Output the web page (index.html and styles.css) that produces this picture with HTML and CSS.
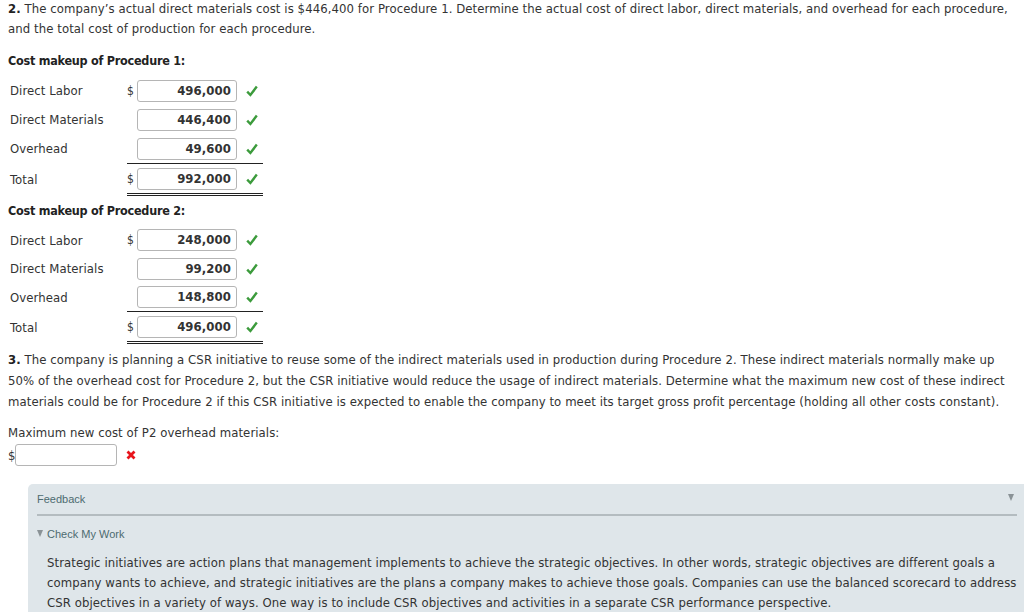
FILE: index.html
```html
<!DOCTYPE html>
<html>
<head>
<meta charset="utf-8">
<link rel="stylesheet" href="styles.css">
</head>
<body>
<div class="page">
  <p class="q q2"><b>2.</b> The company’s actual direct materials cost is $446,400 for Procedure 1. Determine the actual cost of direct labor, direct materials, and overhead for each procedure, and the total cost of production for each procedure.</p>

  <div class="sec-title first">Cost makeup of Procedure 1:</div>
  <div class="tbl">
    <div class="row"><span class="lbl">Direct Labor</span><span class="amt"><span class="cur">$</span><span class="box">496,000</span><svg class="ok" viewBox="0 0 12 12"><path d="M1.2 6.6 L4.4 10 L10.8 1.6" /></svg></span></div>
    <div class="row"><span class="lbl">Direct Materials</span><span class="amt"><span class="cur"></span><span class="box">446,400</span><svg class="ok" viewBox="0 0 12 12"><path d="M1.2 6.6 L4.4 10 L10.8 1.6" /></svg></span></div>
    <div class="row"><span class="lbl">Overhead</span><span class="amt"><span class="cur"></span><span class="box">49,600</span><svg class="ok" viewBox="0 0 12 12"><path d="M1.2 6.6 L4.4 10 L10.8 1.6" /></svg></span></div>
    <div class="row total"><span class="lbl">Total</span><span class="amt"><span class="cur">$</span><span class="box">992,000</span><svg class="ok" viewBox="0 0 12 12"><path d="M1.2 6.6 L4.4 10 L10.8 1.6" /></svg></span></div>
  </div>

  <div class="sec-title second">Cost makeup of Procedure 2:</div>
  <div class="tbl tight">
    <div class="row"><span class="lbl">Direct Labor</span><span class="amt"><span class="cur">$</span><span class="box">248,000</span><svg class="ok" viewBox="0 0 12 12"><path d="M1.2 6.6 L4.4 10 L10.8 1.6" /></svg></span></div>
    <div class="row"><span class="lbl">Direct Materials</span><span class="amt"><span class="cur"></span><span class="box">99,200</span><svg class="ok" viewBox="0 0 12 12"><path d="M1.2 6.6 L4.4 10 L10.8 1.6" /></svg></span></div>
    <div class="row"><span class="lbl">Overhead</span><span class="amt"><span class="cur"></span><span class="box">148,800</span><svg class="ok" viewBox="0 0 12 12"><path d="M1.2 6.6 L4.4 10 L10.8 1.6" /></svg></span></div>
    <div class="row total"><span class="lbl">Total</span><span class="amt"><span class="cur">$</span><span class="box">496,000</span><svg class="ok" viewBox="0 0 12 12"><path d="M1.2 6.6 L4.4 10 L10.8 1.6" /></svg></span></div>
  </div>

  <p class="q q3"><b>3.</b> The company is planning a CSR initiative to reuse some of the indirect materials used in production during Procedure 2. These indirect materials normally make up 50% of the overhead cost for Procedure 2, but the CSR initiative would reduce the usage of indirect materials. Determine what the maximum new cost of these indirect materials could be for Procedure 2 if this CSR initiative is expected to enable the company to meet its target gross profit percentage (holding all other costs constant).</p>

  <div class="max-lbl">Maximum new cost of P2 overhead materials:</div>
  <div class="max-row"><span class="cur2">$</span><span class="box empty"></span><svg class="bad" viewBox="0 0 10 10"><path d="M1.5 1.5 L8.5 8.5 M8.5 1.5 L1.5 8.5" /></svg></div>

  <div class="feedback">
    <div class="fb-head"><span>Feedback</span><svg class="fb-tri" viewBox="0 0 6 7"><path d="M0 0 H6 L3 7 Z" /></svg></div>
    <div class="fb-sub"><svg class="tri-s" viewBox="0 0 6 7"><path d="M0 0 H6 L3 7 Z" /></svg><span>Check My Work</span></div>
    <p class="fb-text">Strategic initiatives are action plans that management implements to achieve the strategic objectives. In other words, strategic objectives are different goals a company wants to achieve, and strategic initiatives are the plans a company makes to achieve those goals. Companies can use the balanced scorecard to address CSR objectives in a variety of ways. One way is to include CSR objectives and activities in a separate CSR performance perspective.</p>
  </div>
</div>
</body>
</html>
```
FILE: styles.css
```css
html, body {
  margin: 0;
  padding: 0;
  background: #fff;
}
body {
  font-family: "DejaVu Sans Condensed", "DejaVu Sans", Verdana, sans-serif;
  font-size: 13px;
  letter-spacing: 0.08px;
  color: #333;
  overflow: hidden;
}
.page {
  padding: 0 0 0 8px;
}
.q {
  margin: 0;
  line-height: 20px;
}
.q b { color: #222; }
.q2 { margin-top: -1px; padding-right: 10px; }
.sec-title {
  font-weight: bold;
  font-size: 12.5px;
  letter-spacing: -0.25px;
  line-height: 20px;
  color: #222;
}
.sec-title.first { margin-top: 12px; }
.sec-title.second { margin-top: 5px; }
.tbl {
  margin-top: 5px;
  padding-left: 2px;
}
.row {
  display: flex;
  align-items: center;
  height: 29px;
}
.tight .row {
  height: 28.5px;
}
.row.total,
.tight .row.total {
  height: 33px;
}
.tight .row.total { margin-top: -0.5px; }
.lbl {
  width: 117px;
}
.amt {
  display: flex;
  align-items: center;
  width: 136px;
  height: 29px;
}
.total .amt {
  border-top: 1px solid #222;
  border-bottom: 3px double #222;
}
.cur {
  width: 10px;
  font-size: 12px;
}
.box {
  box-sizing: border-box;
  width: 100px;
  height: 22px;
  border: 1px solid #b5b5b5;
  border-radius: 3px;
  text-align: right;
  font-weight: bold;
  line-height: 20px;
  padding-right: 5px;
  color: #333;
  background: #fff;
}
.ok {
  width: 12px;
  height: 12px;
  margin-left: 9px;
  fill: none;
  stroke: #3c9b3c;
  stroke-width: 2.4;
}
.q3 {
  margin-top: 5px;
  line-height: 21px;
}
.max-lbl {
  margin-top: 11px;
  line-height: 20px;
}
.max-row {
  display: flex;
  align-items: center;
  height: 22px;
  margin-top: 1px;
}
.cur2 { width: 7px; }
.box.empty {
  width: 102px;
}
.bad {
  width: 10px;
  height: 10px;
  margin-left: 9px;
  stroke: #e8141b;
  stroke-width: 2.8;
  fill: none;
}
.feedback {
  margin: 18px 0 0 20px;
  background: #dfe6ea;
  border-radius: 5px 0 0 0;
  padding: 0 7px 20px 9px;
  font-family: "Liberation Sans", Arial, sans-serif;
  letter-spacing: 0;
}
.fb-head {
  display: flex;
  justify-content: space-between;
  align-items: center;
  height: 30px;
  border-bottom: 2px solid #b4bcc0;
  font-size: 11px;
  color: #4d6b70;
  padding-top: 0;
}
.fb-tri {
  width: 6px;
  height: 7px;
  fill: #8a9296;
  margin-right: 3px;
  margin-top: -3px;
}
.fb-sub {
  display: flex;
  align-items: center;
  margin-top: 10px;
  font-size: 11px;
  color: #4d6b70;
  line-height: 16px;
}
.tri-s {
  width: 6px;
  height: 7px;
  fill: #8a9296;
  margin-right: 4px;
  margin-top: -2px;
}
.fb-text {
  margin: 11px 0 0 10px;
  font-family: "DejaVu Sans Condensed", "DejaVu Sans", Verdana, sans-serif;
  font-size: 13px;
  letter-spacing: 0.08px;
  line-height: 20px;
  color: #333;
}
```
